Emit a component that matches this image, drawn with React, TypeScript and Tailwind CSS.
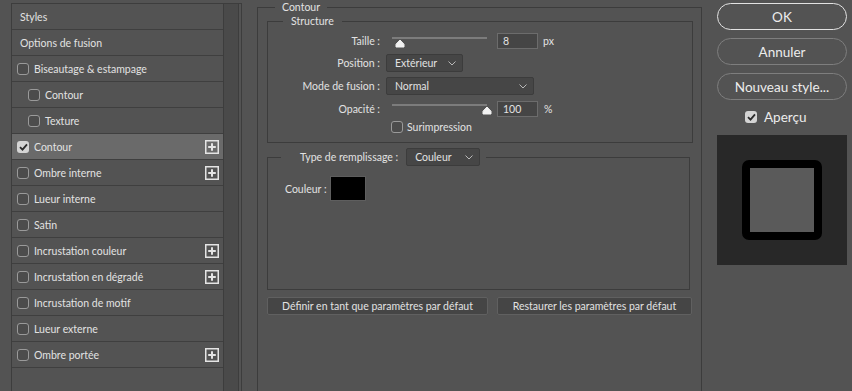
import React from "react";

function Checkbox({ checked }: { checked?: boolean }) {
  return checked ? (
    <span className="w-[12px] h-[12px] rounded-[3px] bg-[#d4d4d4] flex items-center justify-center shrink-0">
      <svg width="9" height="8" viewBox="0 0 9 8">
        <path d="M1 4.2 L3.5 6.6 L8 1.3" stroke="#2b2b2b" strokeWidth="1.8" fill="none" />
      </svg>
    </span>
  ) : (
    <span className="w-[12px] h-[12px] rounded-[3px] border border-[#9a9a9a] bg-[#4c4c4c] shrink-0" />
  );
}

function PlusBox() {
  return (
    <svg width="14" height="14" viewBox="0 0 14 14" className="shrink-0">
      <rect x="0.75" y="0.75" width="12.5" height="12.5" fill="none" stroke="#e4e4e4" strokeWidth="1.5" />
      <path d="M7 3.2V10.8M3.2 7H10.8" stroke="#e4e4e4" strokeWidth="2" />
    </svg>
  );
}

function Chevron() {
  return (
    <svg width="8" height="5" viewBox="0 0 8 5" className="shrink-0">
      <path d="M0.5 0.5 L4 4 L7.5 0.5" stroke="#b8b8b8" strokeWidth="1" fill="none" />
    </svg>
  );
}

function Thumb() {
  return (
    <svg width="10" height="9" viewBox="0 0 10 9">
      <path d="M1 8 L1 5.2 L5 1 L9 5.2 L9 8 Z" fill="#f2f2f2" stroke="#f2f2f2" strokeWidth="1" strokeLinejoin="round" />
    </svg>
  );
}

function Select({ label, w }: { label: string; w: string }) {
  return (
    <div className={`${w} h-[18px] rounded-[2px] border border-[#3c3c3c] bg-[#464646] flex items-center pl-[8px] pr-[6px] justify-between`}>
      <span>{label}</span>
      <Chevron />
    </div>
  );
}

type Row = { label: string; cb?: boolean; checked?: boolean; indent?: boolean; plus?: boolean; selected?: boolean };

const rows: Row[] = [
  { label: "Styles" },
  { label: "Options de fusion" },
  { label: "Biseautage & estampage", cb: true },
  { label: "Contour", cb: true, indent: true },
  { label: "Texture", cb: true, indent: true },
  { label: "Contour", cb: true, checked: true, plus: true, selected: true },
  { label: "Ombre interne", cb: true, plus: true },
  { label: "Lueur interne", cb: true },
  { label: "Satin", cb: true },
  { label: "Incrustation couleur", cb: true, plus: true },
  { label: "Incrustation en dégradé", cb: true, plus: true },
  { label: "Incrustation de motif", cb: true },
  { label: "Lueur externe", cb: true },
  { label: "Ombre portée", cb: true, plus: true },
];

export default function App() {
  return (
    <div className="w-[852px] h-[391px] bg-[#535353] flex overflow-hidden text-[#e2e2e2] text-[10.5px] font-['Lato',sans-serif] leading-[14px]">
      {/* Left panel */}
      <div className="ml-[11px] mt-[3px] w-[231px] h-[400px] flex border-l border-t border-r border-[#3d3d3d] pr-[2px] shrink-0">
        <div className="w-[212px] border-r border-[#3d3d3d] flex flex-col">
          {rows.map((r, i) => (
            <div
              key={i}
              className={`h-[26px] shrink-0 border-b border-[#3f3f3f] flex items-center pr-[4px] ${
                r.selected ? "bg-[#6a6a6a]" : ""
              } ${r.cb ? (r.indent ? "pl-[16px]" : "pl-[5px]") : "pl-[8px]"}`}
            >
              {r.cb && <Checkbox checked={r.checked} />}
              <span className={r.cb ? "ml-[5px]" : ""}>{r.label}</span>
              {r.plus && (
                <span className="ml-auto">
                  <PlusBox />
                </span>
              )}
            </div>
          ))}
        </div>
        <div className="w-[15px] bg-[#4a4a4a] border-r border-[#3d3d3d]" />
      </div>

      {/* Middle */}
      <fieldset className="ml-[15px] w-[445px] h-[400px] shrink-0 border border-[#3c3c3c]">
        <legend className="ml-[17px] px-[7px] leading-[14px]">Contour</legend>
        <div className="pl-[9px] flex flex-col">
          <fieldset className="w-[426px] border border-[#3c3c3c]">
            <legend className="ml-[15px] px-[8px] leading-[14px]">Structure</legend>
            <div className="flex flex-col pb-[7px]">
              {/* Taille */}
              <div className="mt-[5px] h-[16px] flex items-center">
                <span className="w-[112px] text-right">Taille :</span>
                <div className="ml-[6px] w-[105px] h-[16px] relative">
                  <div className="absolute left-[6px] top-[4px] w-[95px] h-[2px] bg-[#7c7c7c]" />
                  <div className="absolute left-[9px] top-[6px]">
                    <Thumb />
                  </div>
                </div>
                <div className="ml-[6px] w-[41px] h-[16px] bg-[#454545] border border-[#6c6c6c] pl-[5px] flex items-center">8</div>
                <span className="ml-[5px]">px</span>
              </div>
              {/* Position */}
              <div className="mt-[5px] h-[18px] flex items-center">
                <span className="w-[112px] text-right">Position :</span>
                <div className="ml-[6px]">
                  <Select label="Extérieur" w="w-[77px]" />
                </div>
              </div>
              {/* Mode */}
              <div className="mt-[5px] h-[18px] flex items-center">
                <span className="w-[112px] text-right">Mode de fusion :</span>
                <div className="ml-[6px]">
                  <Select label="Normal" w="w-[148px]" />
                </div>
              </div>
              {/* Opacité */}
              <div className="mt-[6px] h-[16px] flex items-center">
                <span className="w-[112px] text-right">Opacité :</span>
                <div className="ml-[6px] w-[105px] h-[16px] relative">
                  <div className="absolute left-[6px] top-[3px] w-[95px] h-[2px] bg-[#7c7c7c]" />
                  <div className="absolute left-[96px] top-[5px]">
                    <Thumb />
                  </div>
                </div>
                <div className="ml-[6px] w-[41px] h-[16px] bg-[#454545] border border-[#6c6c6c] pl-[5px] flex items-center">100</div>
                <span className="ml-[6px]">%</span>
              </div>
              {/* Surimpression */}
              <div className="mt-[2px] h-[16px] flex items-center pl-[123px]">
                <Checkbox />
                <span className="ml-[4px]">Surimpression</span>
              </div>
            </div>
          </fieldset>

          <fieldset className="mt-[5px] w-[423px] h-[142px] border border-[#3c3c3c]">
            <legend className="ml-[13px] pl-[19px] pr-[6px]">
              <div className="flex items-center gap-[8px]">
                <span>Type de remplissage :</span>
                <Select label="Couleur" w="w-[74px]" />
              </div>
            </legend>
            <div className="mt-[10px] pl-[17px] flex items-center gap-[3px]">
              <span>Couleur :</span>
              <div className="w-[36px] h-[25px] bg-black border border-[#5e5e5e]" />
            </div>
          </fieldset>

          <div className="mt-[7px] flex gap-[9px]">
            <div className="w-[221px] h-[18px] rounded-[2px] bg-[#454545] border border-[#606060] flex items-center justify-center">
              Définir en tant que paramètres par défaut
            </div>
            <div className="w-[195px] h-[18px] rounded-[2px] bg-[#454545] border border-[#606060] flex items-center justify-center">
              Restaurer les paramètres par défaut
            </div>
          </div>
        </div>
      </fieldset>

      {/* Right column */}
      <div className="ml-[15px] w-[130px] flex flex-col shrink-0 text-[13.5px] text-[#ececec]">
        <div className="mt-[3px] h-[27px] rounded-full border-[1.5px] border-[#e2e2e2] flex items-center justify-center">OK</div>
        <div className="mt-[8px] h-[27px] rounded-full border-[1.5px] border-[#7e7e7e] flex items-center justify-center">Annuler</div>
        <div className="mt-[8px] h-[27px] rounded-full border-[1.5px] border-[#7e7e7e] flex items-center justify-center">Nouveau style...</div>
        <div className="mt-[9px] h-[16px] flex items-center pl-[28px]">
          <Checkbox checked />
          <span className="ml-[7px]">Aperçu</span>
        </div>
        <div className="mt-[10px] w-[130px] h-[130px] bg-[#282828] flex items-center justify-center">
          <div className="w-[80px] h-[80px] rounded-[7px] border-[8px] border-black bg-[#5a5a5a]" />
        </div>
      </div>
    </div>
  );
}
